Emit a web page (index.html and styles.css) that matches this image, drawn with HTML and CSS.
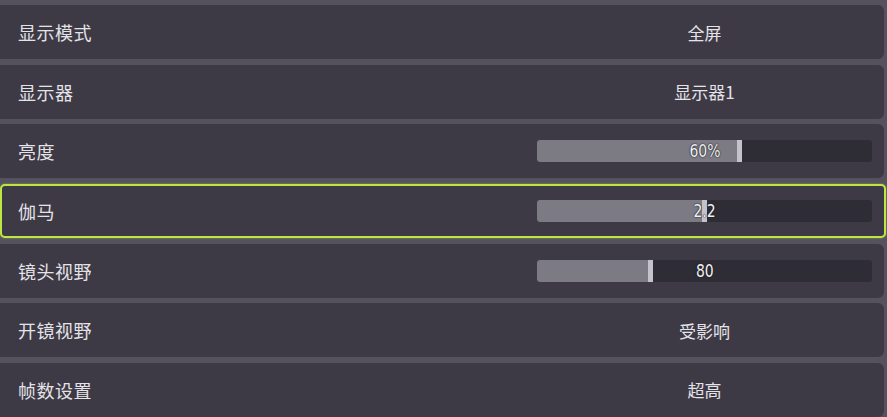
FILE: index.html
```html
<!DOCTYPE html>
<html lang="zh-CN">
<head>
    <meta charset="UTF-8">
    <meta name="viewport" content="width=device-width, initial-scale=1.0">
    <title>显示设置</title>
    <link rel="stylesheet" href="styles.css">
</head>
<body>
    <div class="settings">
        <div class="row">
            <div class="label">显示模式</div>
            <div class="value">全屏</div>
        </div>
        <div class="row">
            <div class="label">显示器</div>
            <div class="value">显示器1</div>
        </div>
        <div class="row">
            <div class="label">亮度</div>
            <div class="value">
                <div class="slider">
                    <div class="fill" style="width: 61.2%"></div>
                    <div class="num"><span>60%</span></div>
                </div>
            </div>
        </div>
        <div class="row active">
            <div class="label">伽马</div>
            <div class="value">
                <div class="slider">
                    <div class="fill" style="width: 50.7%"></div>
                    <div class="num"><span>2.2</span></div>
                </div>
            </div>
        </div>
        <div class="row">
            <div class="label">镜头视野</div>
            <div class="value">
                <div class="slider">
                    <div class="fill" style="width: 34.6%"></div>
                    <div class="num"><span>80</span></div>
                </div>
            </div>
        </div>
        <div class="row">
            <div class="label">开镜视野</div>
            <div class="value">受影响</div>
        </div>
        <div class="row">
            <div class="label">帧数设置</div>
            <div class="value">超高</div>
        </div>
    </div>
</body>
</html>
```

FILE: styles.css
```css
html, body {
    margin: 0;
    padding: 0;
    background-color: #55525d;
    overflow: hidden;
}
body {
    width: 887px;
    height: 417px;
    font-family: "Noto Sans CJK SC", "Noto Sans", sans-serif;
    color: #e4e3e8;
}
.settings {
    display: flex;
    flex-direction: column;
    gap: 5.67px;
    padding-top: 5px;
    width: 884px;
}
.row {
    display: flex;
    align-items: center;
    height: 54px;
    flex-shrink: 0;
    background-color: #3d3a45;
    border-radius: 0 6px 6px 0;
    box-sizing: border-box;
}
.row.active {
    width: 886px;
    border: 2px solid #bde645;
    border-radius: 5px;
    box-shadow: 0 0 2px rgba(189, 230, 69, 0.6);
}
.label {
    width: 537px;
    padding-left: 18px;
    box-sizing: border-box;
    font-size: 18px;
    letter-spacing: 0.5px;
}
.row.active .label {
    padding-left: 16px;
    width: 535px;
}
.value {
    width: 335px;
    text-align: center;
    font-size: 17px;
}
.slider {
    position: relative;
    height: 22px;
    background-color: #2e2c35;
    border-radius: 3px;
    overflow: hidden;
}
.fill {
    height: 100%;
    background-color: #7c7a83;
    border-right: 5px solid #c4c2ca;
    box-sizing: border-box;
}
.num {
    position: absolute;
    left: 0;
    right: 0;
    top: 0;
    line-height: 22px;
    font-family: "DejaVu Sans", sans-serif;
    font-size: 17px;
    color: #f0eff3;
    text-shadow: 0 0 2px #1e1d23, 0 0 1px #1e1d23;
}
.num span {
    display: inline-block;
    transform: scaleX(0.82);
}
```
